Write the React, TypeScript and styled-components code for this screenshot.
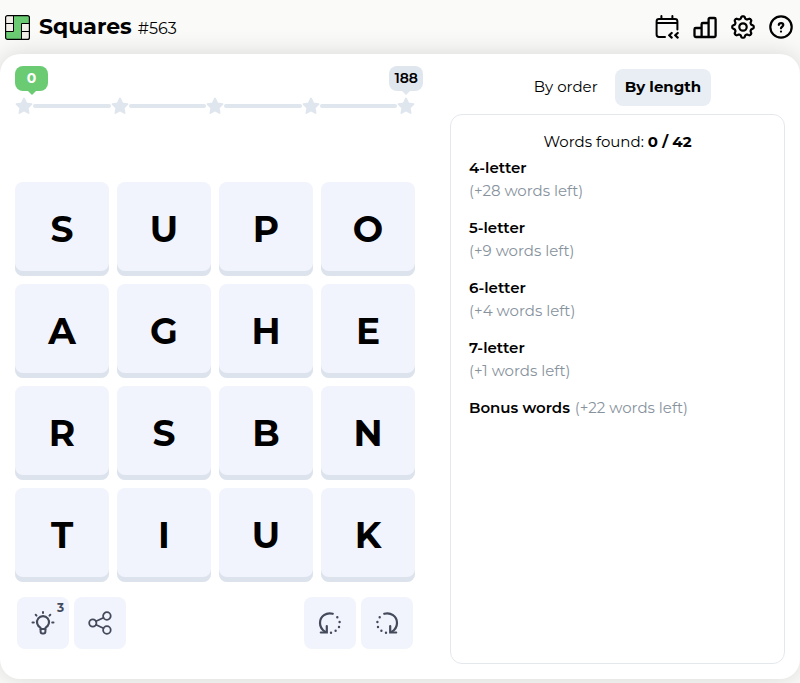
import React, { useState } from "react";
import styled, { createGlobalStyle } from "styled-components";

const GlobalStyle = createGlobalStyle`
  *, *::before, *::after { box-sizing: border-box; }
  body {
    margin: 0;
    background: #fafaf8;
    color: #000;
    font-family: Montserrat, Inter, sans-serif;
    font-size: 15px;
    line-height: 23px;
  }
  h1, h2, p { margin: 0; }
  button { border: 0; padding: 0; background: none; color: inherit; font: inherit; cursor: pointer; }
`;

const Page = styled.div`
  min-height: 100vh;
  padding-bottom: 4px;
  display: flex;
  flex-direction: column;
`;

const Header = styled.header`
  height: 54px;
  padding: 0 7px 0 5px;
  display: flex;
  align-items: center;
  justify-content: space-between;
`;

const Brand = styled.div`
  display: flex;
  align-items: center;
  gap: 9px;
`;

const Title = styled.h1`
  display: flex;
  align-items: baseline;
  gap: 6px;
  padding-top: 2px;
  font-size: 22px;
  line-height: 30px;
  font-weight: 700;
`;

const Issue = styled.span`
  font-size: 16px;
  font-weight: 400;
`;

const Nav = styled.nav`
  display: flex;
  gap: 14px;
`;

const NavButton = styled.button`
  height: 24px;
  svg { display: block; }
`;

const Card = styled.main`
  flex: 1;
  padding: 12px 15px 15px;
  display: grid;
  grid-template-columns: 400fr 335fr;
  gap: 35px;
  background: #fff;
  border-radius: 20px;
  box-shadow: 0 0 24px rgba(0, 0, 0, 0.14);
`;

const Game = styled.section`
  display: flex;
  flex-direction: column;
`;

const Scores = styled.div`
  display: flex;
  justify-content: space-between;
  margin-right: -8px;
`;

const Score = styled.div<{ $active?: boolean }>`
  position: relative;
  min-width: 33px;
  height: 25px;
  padding: 0 5px;
  border-radius: 8px;
  background: ${(p) => (p.$active ? "#6acb73" : "#dfe6ee")};
  color: ${(p) => (p.$active ? "#fff" : "#000")};
  font-size: 14px;
  line-height: 25px;
  font-weight: ${(p) => (p.$active ? 700 : 600)};
  text-align: center;
  &::after {
    content: "";
    position: absolute;
    top: 100%;
    left: 50%;
    margin-left: -4px;
    border: 4px solid transparent;
    border-bottom: 0;
    border-top-color: ${(p) => (p.$active ? "#6acb73" : "#dfe6ee")};
  }
`;

const Track = styled.div`
  display: flex;
  align-items: center;
  margin: 6px 0 67px;
  svg { display: block; flex: none; }
`;

const Segment = styled.span`
  flex: 1;
  height: 4px;
  border-radius: 2px;
  background: #dfe6ee;
`;

const Board = styled.div`
  display: grid;
  grid-template-columns: repeat(4, 1fr);
  gap: 8px;
`;

const Tile = styled.button`
  aspect-ratio: 1;
  border-radius: 8px;
  background: #f1f4fc;
  box-shadow: inset 0 -5px #dce3ec;
  font-size: 36px;
  line-height: 44px;
  font-weight: 700;
`;

const Tools = styled.div`
  display: flex;
  justify-content: space-between;
  padding: 15px 2px;
`;

const ToolGroup = styled.div`
  display: flex;
  gap: 5px;
`;

const ToolButton = styled.button`
  position: relative;
  width: 52px;
  height: 52px;
  display: grid;
  place-items: center;
  border-radius: 8px;
  background: #f1f4fc;
  color: #444a5c;
`;

const Count = styled.span`
  position: absolute;
  top: 4px;
  right: 5px;
  font-size: 12px;
  line-height: 14px;
  font-weight: 700;
`;

const Words = styled.section`
  display: flex;
  flex-direction: column;
  padding-top: 3px;
`;

const Tabs = styled.div`
  display: flex;
  justify-content: center;
  gap: 7px;
  margin-bottom: 8px;
`;

const Tab = styled.button<{ $active: boolean }>`
  height: 37px;
  padding: 0 10px 2px;
  border-radius: 8px;
  background: ${(p) => (p.$active ? "#e9eef5" : "transparent")};
  font-weight: ${(p) => (p.$active ? 700 : 400)};
`;

const Panel = styled.div`
  flex: 1;
  padding: 15px 18px;
  border: 1px solid #e4e8ed;
  border-radius: 12px;
`;

const Summary = styled.p`
  margin-bottom: 3px;
  text-align: center;
`;

const Group = styled.div<{ $inline?: boolean }>`
  display: flex;
  flex-direction: ${(p) => (p.$inline ? "row" : "column")};
  column-gap: 5px;
  margin-bottom: 14px;
`;

const GroupTitle = styled.h2`
  font-size: 15px;
  line-height: 23px;
  font-weight: 600;
`;

const Left = styled.span`
  color: #87929d;
`;

const Logo = () => (
  <svg width="25" height="25" viewBox="0 0 25 25" aria-hidden="true">
    <rect x=".6" y=".6" width="23.8" height="23.8" rx="2" fill="#6acb73" />
    <path d="M2.5 .6H8.5V16.5H.6V2.5Q.6 .6 2.5 .6ZM16.5 8.5H24.4V22.5Q24.4 24.4 22.5 24.4H16.5Z" fill="#f2f0e8" />
    <path d="M1 8.5H8.5M16.5 16.5H24M8.5 1V16.5H1M24 8.5H16.5V24" fill="none" stroke="#000" strokeWidth="1" />
    <rect x=".6" y=".6" width="23.8" height="23.8" rx="2" fill="none" stroke="#000" strokeWidth="1.2" />
  </svg>
);

const NavIcon = ({ children }: { children: React.ReactNode }) => (
  <svg width="24" height="24" viewBox="0 0 24 24" fill="none" stroke="#000" strokeWidth="2" strokeLinecap="round" strokeLinejoin="round" aria-hidden="true">
    {children}
  </svg>
);

const gearPath =
  Array.from({ length: 96 }, (_, i) => {
    const a = (i / 96) * Math.PI * 2;
    const r = 9.6 + 1.2 * Math.tanh(1.8 * Math.cos(8 * a));
    return `${i ? "L" : "M"}${(12 + r * Math.cos(a)).toFixed(2)} ${(12 + r * Math.sin(a)).toFixed(2)}`;
  }).join("") + "Z";

const Star = () => (
  <svg width="18" height="18" viewBox="0 0 18 18" aria-hidden="true">
    <path d="M9 1.5l2.3 4.9 5.2.7-3.8 3.7.9 5.2L9 13.5 4.4 16l.9-5.2L1.5 7.1l5.2-.7z" fill="#dfe6ee" stroke="#dfe6ee" strokeWidth="1.8" strokeLinejoin="round" />
  </svg>
);

const ToolIcon = ({ children }: { children: React.ReactNode }) => (
  <svg width="24" height="24" viewBox="0 0 24 24" fill="none" stroke="currentColor" strokeWidth="1.8" strokeLinecap="round" strokeLinejoin="round" aria-hidden="true">
    {children}
  </svg>
);

const RotateShape = () => (
  <>
    <path d="M14.8 2.8C8.4.9 2 5.2 2 11.9c0 4 2 6.8 5.4 9" strokeWidth="2.2" />
    <path d="M2.8 21.5H8.8V15" strokeWidth="2.2" strokeLinejoin="miter" />
    <path d="M19.3 6.2h.01M21.6 11h.01M21 16h.01M17.6 19.8h.01M13 21.8h.01" strokeWidth="2.4" />
  </>
);

const groups = [
  { title: "4-letter", left: 28 },
  { title: "5-letter", left: 9 },
  { title: "6-letter", left: 4 },
  { title: "7-letter", left: 1 },
  { title: "Bonus words", left: 22, inline: true },
];

const tabs = ["By order", "By length"];

export default function App() {
  const [tab, setTab] = useState("By length");
  return (
    <>
      <GlobalStyle />
      <Page>
        <Header>
          <Brand>
            <Logo />
            <Title>Squares <Issue>#563</Issue></Title>
          </Brand>
          <Nav>
            <NavButton aria-label="Archive">
              <NavIcon>
                <path d="M10 22H4Q1.6 22 1.6 19.6V6.4Q1.6 4 4 4H20Q22.4 4 22.4 6.4V14.5M2 8H22M6.4 1V4M17.4 1V4" />
                <path d="M16.7 18L14.2 20.3 16.7 22.6M22.7 18L20.2 20.3 22.7 22.6" strokeWidth="2.2" />
              </NavIcon>
            </NavButton>
            <NavButton aria-label="Statistics">
              <NavIcon>
                <path strokeWidth="2.3" d="M8.6 22H2.8Q1.5 22 1.5 20.7V14.3Q1.5 13 2.8 13H8.6M8.6 22V9.3Q8.6 8 9.9 8H15.6M8.6 22H15.6M15.6 22V4.3Q15.6 3 16.9 3H21.3Q22.6 3 22.6 4.3V20.7Q22.6 22 21.3 22Z" />
              </NavIcon>
            </NavButton>
            <NavButton aria-label="Settings">
              <NavIcon>
                <path d={gearPath} strokeWidth="2.2" />
                <circle cx="12" cy="12" r="3.7" strokeWidth="2.2" />
              </NavIcon>
            </NavButton>
            <NavButton aria-label="Help">
              <NavIcon>
                <circle cx="12" cy="12" r="10.7" strokeWidth="2.2" />
                <path d="M9.8 9.9C10 7.6 14.3 7.5 14.3 10.1C14.3 11.7 12 11.8 12 13.3M12 16.6h.01" strokeWidth="2.2" />
              </NavIcon>
            </NavButton>
          </Nav>
        </Header>
        <Card>
          <Game>
            <Scores>
              <Score $active>0</Score>
              <Score>188</Score>
            </Scores>
            <Track>
              <Star />
              {[1, 2, 3, 4].map((n) => (
                <React.Fragment key={n}>
                  <Segment />
                  <Star />
                </React.Fragment>
              ))}
            </Track>
            <Board>
              {[..."SUPOAGHERSBNTIUK"].map((letter, i) => (
                <Tile key={i}>{letter}</Tile>
              ))}
            </Board>
            <Tools>
              <ToolGroup>
                <ToolButton aria-label="Hint, 3 left">
                  <ToolIcon>
                    <path d="M9.5 18V16.6A6 6 0 1 1 14.5 16.6V18Z" strokeWidth="2.1" />
                    <path d="M9.6 18V20.5Q9.6 22.5 11.3 22.5H12.7Q14.4 22.5 14.4 20.5V18" strokeWidth="2" />
                    <path d="M12 1V2M1.5 11.5H2.8M21.2 11.5H22.5M4.7 3.8L5.5 4.6M19.3 3.8L18.5 4.6" strokeWidth="2" />
                  </ToolIcon>
                  <Count>3</Count>
                </ToolButton>
                <ToolButton aria-label="Share">
                  <ToolIcon>
                    <circle cx="4.8" cy="12" r="3.6" />
                    <circle cx="18.9" cy="5" r="3.8" />
                    <circle cx="18.9" cy="19" r="3.8" />
                    <path d="M8 10.3L15.5 6.7M8 13.7L15.5 17.3" />
                  </ToolIcon>
                </ToolButton>
              </ToolGroup>
              <ToolGroup>
                <ToolButton aria-label="Rotate left">
                  <ToolIcon><RotateShape /></ToolIcon>
                </ToolButton>
                <ToolButton aria-label="Rotate right">
                  <ToolIcon>
                    <g transform="matrix(-1 0 0 1 24 0)"><RotateShape /></g>
                  </ToolIcon>
                </ToolButton>
              </ToolGroup>
            </Tools>
          </Game>
          <Words>
            <Tabs role="tablist">
              {tabs.map((name) => (
                <Tab key={name} role="tab" aria-selected={tab === name} $active={tab === name} onClick={() => setTab(name)}>
                  {name}
                </Tab>
              ))}
            </Tabs>
            <Panel>
              <Summary>Words found: <b>0 / 42</b></Summary>
              {groups.map((g) => (
                <Group key={g.title} $inline={g.inline}>
                  <GroupTitle>{g.title}</GroupTitle>
                  <Left>(+{g.left} words left)</Left>
                </Group>
              ))}
            </Panel>
          </Words>
        </Card>
      </Page>
    </>
  );
}
